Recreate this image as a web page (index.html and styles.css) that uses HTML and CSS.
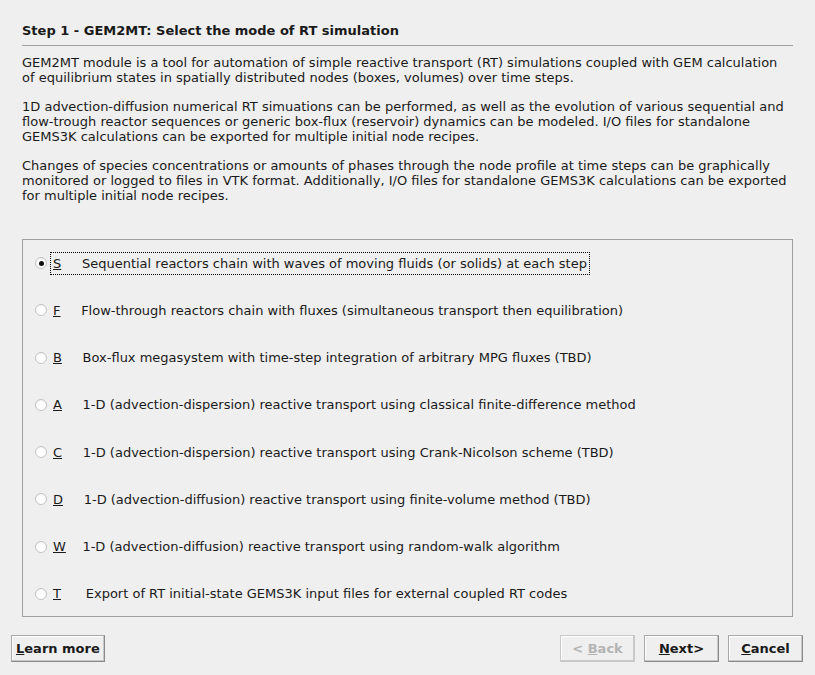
FILE: index.html
```html
<!DOCTYPE html>
<html>
<head>
<meta charset="utf-8">
<link rel="stylesheet" href="styles.css">
</head>
<body>
<div class="wizard">
  <div class="page">
    <h1 class="title">Step 1 - GEM2MT: Select the mode of RT simulation</h1>
    <div class="sep"></div>
    <p class="para">GEM2MT module is a tool for automation of simple reactive transport (RT) simulations coupled with GEM calculation of equilibrium states in spatially distributed nodes (boxes, volumes) over time steps.</p>
    <p class="para">1D advection-diffusion numerical RT simuations can be performed, as well as the evolution of various sequential and flow-trough reactor sequences or generic box-flux (reservoir) dynamics can be modeled. I/O files for standalone GEMS3K calculations can be exported for multiple initial node recipes.</p>
    <p class="para">Changes of species concentrations or amounts of phases through the node profile at time steps can be graphically monitored or logged to files in VTK format. Additionally, I/O files for standalone GEMS3K calculations can be exported for multiple initial node recipes.</p>
    <div class="group">
      <div class="row"><span class="radio checked"></span><span class="label focus"><u>S</u>     Sequential reactors chain with waves of moving fluids (or solids) at each step</span></div>
      <div class="row"><span class="radio"></span><span class="label"><u>F</u>     Flow-through reactors chain with fluxes (simultaneous transport then equilibration)</span></div>
      <div class="row"><span class="radio"></span><span class="label"><u>B</u>     Box-flux megasystem with time-step integration of arbitrary MPG fluxes (TBD)</span></div>
      <div class="row"><span class="radio"></span><span class="label"><u>A</u>     1-D (advection-dispersion) reactive transport using classical finite-difference method</span></div>
      <div class="row"><span class="radio"></span><span class="label"><u>C</u>     1-D (advection-dispersion) reactive transport using Crank-Nicolson scheme (TBD)</span></div>
      <div class="row"><span class="radio"></span><span class="label"><u>D</u>     1-D (advection-diffusion) reactive transport using finite-volume method (TBD)</span></div>
      <div class="row"><span class="radio"></span><span class="label"><u>W</u>    1-D (advection-diffusion) reactive transport using random-walk algorithm</span></div>
      <div class="row"><span class="radio"></span><span class="label"><u>T</u>      Export of RT initial-state GEMS3K input files for external coupled RT codes</span></div>
    </div>
  </div>
  <div class="buttons">
    <button class="btn"><u>L</u>earn more</button>
    <div class="spacer"></div>
    <button class="btn disabled">&lt; <u>B</u>ack</button>
    <button class="btn"><u>N</u>ext&gt;</button>
    <button class="btn"><u>C</u>ancel</button>
  </div>
</div>
</body>
</html>
```

FILE: styles.css
```css
html, body {
  margin: 0;
  padding: 0;
  background: #efefef;
}
body {
  font-family: "DejaVu Sans", sans-serif;
  font-size: 13px;
  line-height: 15px;
  color: #1a1a1a;
  width: 815px;
  height: 675px;
  overflow: hidden;
}
.wizard {
  display: flex;
  flex-direction: column;
  height: 675px;
}
.page {
  padding: 23px 22px 0 22px;
}
.title {
  margin: 0;
  font-size: 13px;
  line-height: 15px;
  font-weight: bold;
}
.sep {
  height: 1px;
  background: #a0a0a0;
  margin-top: 7px;
  margin-bottom: 9px;
}
.para {
  margin: 0 0 14px 0;
}
.group {
  margin-top: 36px;
  border: 1px solid #a0a0a0;
  height: 378px;
  box-sizing: border-box;
  padding: 12px 0 11px 12px;
  display: flex;
  flex-direction: column;
  justify-content: space-between;
}
.row {
  display: flex;
  align-items: center;
  height: 22px;
}
.radio {
  width: 12px;
  height: 12px;
  box-sizing: border-box;
  border-radius: 50%;
  border: 1px solid #c4c4c4;
  background: radial-gradient(circle at 50% 60%, #ffffff 50%, #e8e8e8 100%);
  margin-right: 3px;
  position: relative;
  flex: none;
}
.radio.checked::after {
  content: "";
  position: absolute;
  left: 2.5px;
  top: 2.5px;
  width: 5px;
  height: 5px;
  border-radius: 50%;
  background: #111;
}
.label {
  white-space: pre;
  padding: 3px 2px;
  border: 1px dotted transparent;
}
.label.focus {
  border-color: #000;
}
.buttons {
  display: flex;
  align-items: center;
  padding: 0 12px 0 11px;
  margin-top: 18px;
  gap: 9px;
}
.spacer {
  flex: 1;
}
.btn {
  font-family: "DejaVu Sans", sans-serif;
  font-weight: bold;
  font-size: 13px;
  color: #1a1a1a;
  background: #efefef;
  border: 1px solid #8a8a8a;
  border-top-color: #a8a8a8;
  border-left-color: #a8a8a8;
  box-shadow: inset -1px -1px 0 #c8c8c8, inset 1px 1px 0 #ffffff;
  height: 27px;
  min-width: 75px;
  padding: 0 4px;
  margin: 0;
}
.btn.disabled {
  color: #b4b4b4;
  border-color: #c8c8c8;
}
```
